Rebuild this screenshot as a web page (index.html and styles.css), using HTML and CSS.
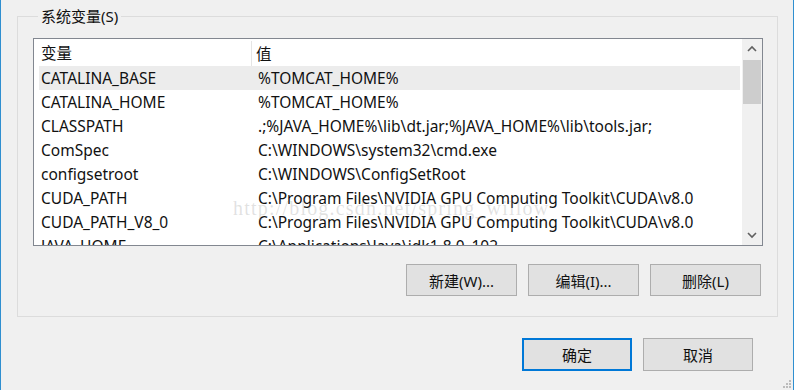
FILE: index.html
```html
<!DOCTYPE html>
<html lang="zh-CN">
<head>
    <meta charset="UTF-8">
    <title>环境变量</title>
    <link rel="stylesheet" href="styles.css">
</head>
<body>
    <div class="window">
        <fieldset class="group">
            <legend>系统变量(S)</legend>

            <div class="listview">
                <div class="list-body">
                    <div class="list-head">
                        <span class="col-name">变量</span>
                        <span class="col-value">值</span>
                    </div>
                    <div class="row selected"><span class="col-name">CATALINA_BASE</span><span class="col-value">%TOMCAT_HOME%</span></div>
                    <div class="row"><span class="col-name">CATALINA_HOME</span><span class="col-value">%TOMCAT_HOME%</span></div>
                    <div class="row"><span class="col-name">CLASSPATH</span><span class="col-value">.;%JAVA_HOME%\lib\dt.jar;%JAVA_HOME%\lib\tools.jar;</span></div>
                    <div class="row"><span class="col-name">ComSpec</span><span class="col-value">C:\WINDOWS\system32\cmd.exe</span></div>
                    <div class="row"><span class="col-name">configsetroot</span><span class="col-value">C:\WINDOWS\ConfigSetRoot</span></div>
                    <div class="row"><span class="col-name">CUDA_PATH</span><span class="col-value">C:\Program Files\NVIDIA GPU Computing Toolkit\CUDA\v8.0</span></div>
                    <div class="row"><span class="col-name">CUDA_PATH_V8_0</span><span class="col-value">C:\Program Files\NVIDIA GPU Computing Toolkit\CUDA\v8.0</span></div>
                    <div class="row"><span class="col-name">JAVA_HOME</span><span class="col-value">C:\Applications\Java\jdk1.8.0_102</span></div>
                    <div class="watermark">http://blog.csdn.net/spring_willow</div>
                </div>
                <div class="scrollbar">
                    <svg class="arrow" width="20" height="20" viewBox="0 0 20 20"><path d="M6 12 L10 8 L14 12" fill="none" stroke="#606060" stroke-width="1.6"/></svg>
                    <div class="track"><div class="thumb"></div></div>
                    <svg class="arrow" width="20" height="20" viewBox="0 0 20 20"><path d="M6 8 L10 12 L14 8" fill="none" stroke="#606060" stroke-width="1.6"/></svg>
                </div>
            </div>

            <div class="list-buttons">
                <button class="btn">新建(W)...</button>
                <button class="btn">编辑(I)...</button>
                <button class="btn">删除(L)</button>
            </div>
        </fieldset>

        <div class="dialog-buttons">
            <button class="btn btn-small default">确定</button>
            <button class="btn btn-small">取消</button>
        </div>

        <svg class="grip" width="8" height="8" viewBox="0 0 8 8">
            <rect x="6" y="0" width="2" height="2" fill="#bcbcbc"/>
            <rect x="3" y="3" width="2" height="2" fill="#bcbcbc"/>
            <rect x="6" y="3" width="2" height="2" fill="#bcbcbc"/>
            <rect x="0" y="6" width="2" height="2" fill="#bcbcbc"/>
            <rect x="3" y="6" width="2" height="2" fill="#bcbcbc"/>
            <rect x="6" y="6" width="2" height="2" fill="#bcbcbc"/>
        </svg>
    </div>
</body>
</html>
```

FILE: styles.css
```css
body {
    margin: 0;
    background-color: #f0f0f0;
    font-family: "Noto Sans", "Noto Sans CJK SC", sans-serif;
    font-size: 15.5px;
    color: #111;
    overflow: hidden;
}
.window {
    position: relative;
    height: 390px;
    box-sizing: border-box;
    border-left: 1px solid #2f8fd0;
    border-right: 1px solid #2f8fd0;
    padding-top: 7px;
}
.group {
    margin: 0 15px 0 16px;
    padding: 13px 14px 20px 15px;
    border: 1px solid #dcdcdc;
    min-width: 0;
}
.group legend {
    margin-left: 5px;
    padding: 0 3px;
    height: 18px;
    line-height: 18px;
    font-size: 15px;
}
.listview {
    display: flex;
    height: 206px;
    border: 1px solid #828790;
    background-color: white;
    overflow: hidden;
}
.list-body {
    position: relative;
    flex: 1;
    padding-left: 5px;
    padding-right: 2px;
    overflow: hidden;
}
.list-head {
    display: flex;
    height: 27px;
    align-items: center;
    padding-top: 1px;
    box-sizing: border-box;
}
.list-head .col-name {
    border-right: 1px solid #e5e5e5;
    height: 25px;
    line-height: 25px;
    box-sizing: border-box;
}
.row {
    display: flex;
    height: 24px;
    line-height: 24px;
    white-space: nowrap;
}
.row.selected {
    background-color: #ececec;
}
.col-name {
    width: 213px;
    padding-left: 2px;
    flex-shrink: 0;
}
.col-value {
    padding-left: 4px;
}
.watermark {
    position: absolute;
    left: 199px;
    top: 158px;
    font-family: "Liberation Serif", serif;
    font-size: 20px;
    letter-spacing: 1.2px;
    color: rgba(150, 150, 150, 0.28);
    white-space: nowrap;
}
.scrollbar {
    width: 20px;
    display: flex;
    flex-direction: column;
    background-color: #f0f0f0;
}
.arrow {
    display: block;
    flex-shrink: 0;
}
.track {
    flex: 1;
    padding: 1px 1px;
}
.thumb {
    height: 44px;
    background-color: #cdcdcd;
}
.list-buttons {
    display: flex;
    justify-content: flex-end;
    gap: 11px;
    margin-top: 18px;
    margin-right: 2px;
}
.btn {
    width: 111px;
    height: 32px;
    background-color: #e1e1e1;
    border: 1px solid #adadad;
    font-family: "Noto Sans", "Noto Sans CJK SC", sans-serif;
    font-size: 15px;
    color: #111;
    padding: 0;
}
.dialog-buttons {
    display: flex;
    justify-content: flex-end;
    gap: 11px;
    margin-top: 21px;
    margin-right: 40px;
}
.btn-small {
    width: 110px;
    height: 33px;
}
.btn.default {
    border: 2px solid #0078d7;
}
.grip {
    position: absolute;
    right: 2px;
    bottom: 2px;
}
```
